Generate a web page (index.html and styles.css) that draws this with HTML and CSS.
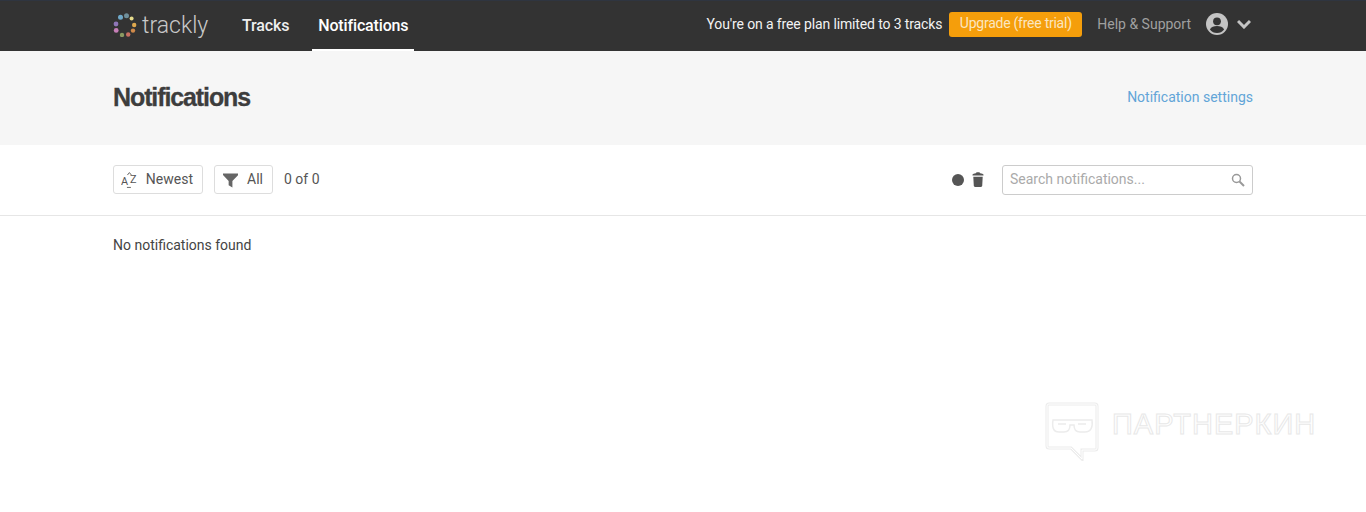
FILE: index.html
```html
<!DOCTYPE html>
<html lang="en">
<head>
    <meta charset="UTF-8">
    <meta name="viewport" content="width=device-width, initial-scale=1.0">
    <title>Notifications</title>
    <link rel="stylesheet" href="styles.css">
</head>
<body>
    <!-- Top navigation -->
    <header class="topbar">
        <div class="wrap topbar-inner">
            <a class="logo" href="#">
                <svg class="logo-mark" width="24" height="24" viewBox="0 0 24 24">
                    <circle cx="13.5" cy="2.8" r="2.5" fill="#6f8f9b"/>
                    <circle cx="7.5" cy="4.2" r="2.5" fill="#6fa9c9"/>
                    <circle cx="18.6" cy="5.6" r="2" fill="#e6dc8c"/>
                    <circle cx="21.2" cy="12" r="2.2" fill="#e0a94e"/>
                    <circle cx="20" cy="17.6" r="2.2" fill="#d08a4a"/>
                    <circle cx="15.2" cy="21.5" r="2.2" fill="#c96f62"/>
                    <circle cx="9" cy="22" r="2.2" fill="#8b9a62"/>
                    <circle cx="3.2" cy="17.4" r="2.4" fill="#c77fb8"/>
                    <circle cx="3" cy="11" r="2.4" fill="#8f76b8"/>
                </svg>
                <span class="logo-text">trackly</span>
            </a>
            <nav class="nav">
                <a class="nav-link" href="#">Tracks</a>
                <a class="nav-link active" href="#">Notifications</a>
            </nav>
            <div class="topbar-right">
                <span class="plan-note">You're on a free plan limited to 3 tracks</span>
                <a class="upgrade" href="#">Upgrade (free trial)</a>
                <a class="help" href="#">Help &amp; Support</a>
                <svg class="avatar" width="22" height="22" viewBox="0 0 22 22">
                    <circle cx="11" cy="11" r="11" fill="#c4c4c4"/>
                    <circle cx="11" cy="8.300" r="3.900" fill="#333"/>
                    <path d="M3.900 16.400c1.300-2.400 4-3.400 7.100-3.400s5.800 1 7.100 3.400A9 9 0 0 1 11 20a9 9 0 0 1-7.100-3.600z" fill="#333"/>
                </svg>
                <svg class="chevron" width="14" height="10" viewBox="0 0 14 10">
                    <path d="M1 2l6 6 6-6" fill="none" stroke="#c4c4c4" stroke-width="3"/>
                </svg>
            </div>
        </div>
    </header>

    <!-- Page title -->
    <section class="page-head">
        <div class="wrap page-head-inner">
            <h1>Notifications</h1>
            <a class="settings-link" href="#">Notification settings</a>
        </div>
    </section>

    <!-- Toolbar -->
    <section class="toolbar">
        <div class="wrap toolbar-inner">
            <button class="tool-btn sort-btn" type="button">
                <svg class="az-icon" width="17" height="17" viewBox="0 0 17 17">
                    <text x="0" y="14" class="az-text">A</text>
                    <text x="9" y="12" class="az-text">Z</text>
                    <path d="M6.500 4l2-2.500 2 2.500" fill="none" stroke="#666"/>
                    <path d="M6 16.500h4" stroke="#666"/>
                </svg>
                <span>Newest</span>
            </button>
            <button class="tool-btn filter-btn" type="button">
                <svg width="16" height="16" viewBox="0 0 16 16">
                    <path d="M0 1h16v1.800L10 9v7l-4-2.500V9L0 2.800z" fill="#666"/>
                </svg>
                <span>All</span>
            </button>
            <span class="count">0 of 0</span>
            <div class="toolbar-right">
                <span class="dot"></span>
                <svg class="trash" width="12" height="15" viewBox="0 0 12 15">
                    <path d="M.5 2.500C2 1.500 3.500 1.300 4 1.300L4.500 .3h3l.5 1c.5 0 2 .2 3.500 1.200v1H.5zM1.300 4.700h9.400l-.5 9.300-1 1H2.800l-1-1z" fill="#555"/>
                </svg>
                <div class="search">
                    <input type="text" placeholder="Search notifications...">
                    <svg width="14" height="14" viewBox="0 0 14 14">
                        <circle cx="5.500" cy="5.500" r="4" fill="none" stroke="#999" stroke-width="1.500"/>
                        <path d="M8.500 8.500L13 13" stroke="#999" stroke-width="2"/>
                    </svg>
                </div>
            </div>
        </div>
    </section>

    <div class="wrap empty">No notifications found</div>

    <!-- Watermark -->
    <div class="watermark">
        <svg width="54" height="59" viewBox="0 0 54 59">
            <path class="wm-out" d="M4 2h46a2 2 0 0 1 2 2v42a2 2 0 0 1-2 2H37v9L26 46H4a2 2 0 0 1-2-2V4a2 2 0 0 1 2-2z"/>
            <path class="wm-in" d="M4 2h46a2 2 0 0 1 2 2v42a2 2 0 0 1-2 2H37v9L26 46H4a2 2 0 0 1-2-2V4a2 2 0 0 1 2-2z"/>
            <path class="wm-glass" d="M8 18h39c1 7-1 12-7 12h-5c-4 0-6-3-6-7h-4c0 4-2 7-6 7h-5c-6 0-7-5-6-12zM13 22h8M33 22h8"/>
        </svg>
        <span class="watermark-text">ПАРТНЕРКИН</span>
    </div>
</body>
</html>
```

FILE: styles.css
```css
* {
    box-sizing: border-box;
}

body {
    margin: 0;
    font-family: Roboto, sans-serif;
    font-size: 14px;
    color: #444;
    background-color: white;
    overflow: hidden;
}

a {
    text-decoration: none;
}

.wrap {
    width: 1140px;
    margin-left: 113px;
}

/* Top navigation */
.topbar {
    height: 51px;
    background-color: #333;
    border-top: 1px solid #2f3540;
}

.topbar-inner {
    display: flex;
    align-items: center;
    height: 50px;
}

.logo {
    display: flex;
    align-items: center;
    gap: 5px;
    width: 123px;
    margin-top: -2px;
}

.logo-text {
    font-size: 23px;
    font-weight: 300;
    color: #c9c9c9;
}

.nav {
    display: flex;
    align-self: stretch;
}

.nav-link {
    display: flex;
    align-items: center;
    padding: 0 6px;
    margin-right: 17px;
    height: 50px;
    font-size: 16px;
    font-weight: 500;
    letter-spacing: -0.15px;
    color: #eee;
    border-bottom: 2px solid transparent;
}

.nav-link.active {
    color: white;
    border-bottom-color: white;
    margin-right: 0;
}

.topbar-right {
    display: flex;
    align-items: center;
    margin-left: auto;
    margin-top: -4px;
}

.plan-note {
    color: #f2f2f2;
    letter-spacing: -0.13px;
    margin-right: 7px;
    margin-top: -1px;
}

.upgrade {
    background-color: #f59e0b;
    color: #fbe6c0;
    padding: 0 10.5px;
    height: 25px;
    line-height: 23px;
    letter-spacing: -0.25px;
    border-radius: 3px;
    margin-right: 15px;
}

.help {
    color: #a0a0a0;
    margin-right: 15px;
    margin-top: -1px;
}

.chevron {
    margin-left: 9px;
    margin-right: 2px;
}

/* Page title */
.page-head {
    height: 94px;
    background-color: #f6f6f6;
}

.page-head-inner {
    display: flex;
    align-items: center;
    justify-content: space-between;
    height: 92px;
}

h1 {
    margin: 1px 0 0;
    font-family: "Liberation Sans", sans-serif;
    font-size: 25px;
    font-weight: bold;
    color: #3d3d3d;
    letter-spacing: -1.1px;
    -webkit-text-stroke: 0.3px #3d3d3d;
}

.settings-link {
    color: #62a5d8;
}

/* Toolbar */
.toolbar {
    height: 71px;
    border-bottom: 1px solid #e6e6e6;
}

.toolbar-inner {
    display: flex;
    align-items: center;
    height: 69px;
}

.tool-btn {
    display: flex;
    align-items: center;
    height: 29px;
    padding: 0 9px 0 7px;
    font-family: Roboto, sans-serif;
    font-size: 14px;
    color: #555;
    background-color: white;
    border: 1px solid #ddd;
    border-radius: 3px;
}

.tool-btn span {
    margin-top: -1px;
}

.sort-btn {
    width: 90px;
    gap: 8px;
    margin-right: 11px;
}

.az-text {
    font-family: Roboto, sans-serif;
    font-size: 11px;
    fill: #555;
}

.filter-btn {
    width: 59px;
    gap: 9px;
    padding-left: 8px;
    margin-right: 11px;
}

.count {
    color: #555;
    margin-top: -1px;
}

.toolbar-right {
    display: flex;
    align-items: center;
    margin-left: auto;
}

.dot {
    width: 12px;
    height: 12px;
    border-radius: 50%;
    background-color: #555;
    margin-right: 8px;
}

.trash {
    margin-right: 18px;
}

.search {
    display: flex;
    align-items: center;
    width: 251px;
    height: 30px;
    padding: 0 7px 0 7px;
    border: 1px solid #ccc;
    border-radius: 3px;
}

.search input {
    flex: 1;
    min-width: 0;
    margin-top: -2px;
    border: none;
    outline: none;
    padding: 0;
    font-family: Roboto, sans-serif;
    font-size: 14px;
    color: #444;
}

.search input::placeholder {
    color: #aaa;
}

.empty {
    padding-top: 21px;
    color: #444;
}

/* Watermark sits over the page corner */
.watermark {
    position: absolute;
    left: 1045px;
    top: 402px;
    display: flex;
    gap: 13px;
}

.wm-out {
    fill: none;
    stroke: #ececec;
    stroke-width: 3;
}

.wm-in {
    fill: none;
    stroke: white;
    stroke-width: 1;
}

.wm-glass {
    fill: none;
    stroke: #ececec;
    stroke-width: 1.500;
}

.watermark-text {
    margin-top: 6px;
    font-family: "Liberation Sans", sans-serif;
    font-size: 29px;
    line-height: 32px;
    letter-spacing: 1px;
    color: transparent;
    -webkit-text-stroke: 1px #e8e8e8;
}
```
